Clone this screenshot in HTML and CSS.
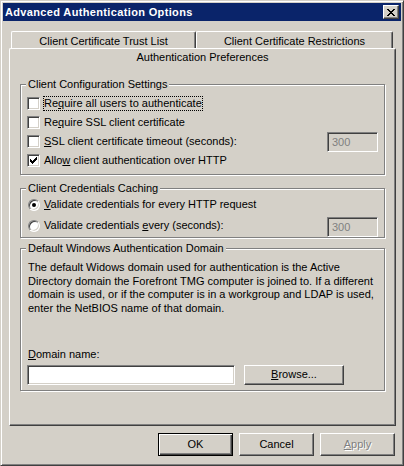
FILE: index.html
```html
<!DOCTYPE html>
<html>
<head>
<meta charset="utf-8">
<title>Advanced Authentication Options</title>
<link rel="stylesheet" href="styles.css">
</head>
<body>
<div class="window">
  <div class="titlebar">
    <span class="title">Advanced Authentication Options</span>
    <span class="caption-btn">
      <svg width="8" height="7" viewBox="0 0 8 7" shape-rendering="crispEdges"><path fill="#000" d="M0 0h2v1H0zM6 0h2v1H6zM1 1h2v1H1zM5 1h2v1H5zM2 2h4v1H2zM3 3h2v1H3zM2 4h4v1H2zM1 5h2v1H1zM5 5h2v1H5zM0 6h2v1H0zM6 6h2v1H6z"/></svg>
    </span>
  </div>

  <div class="tabrow">
    <div class="tab tab-trust">Client Certificate Trust List</div>
    <div class="tab tab-restr">Client Certificate Restrictions</div>
  </div>

  <div class="panel">
    <div class="tab-active">Authentication Preferences</div>

    <div class="group group-config">
      <div class="group-title">Client Configuration Settings</div>
      <div class="row row-first">
        <span class="check"></span>
        <span class="label focus">Re<u>q</u>uire all users to authenticate</span>
      </div>
      <div class="row">
        <span class="check"></span>
        <span class="label">Re<u>q</u>uire SSL client certificate</span>
      </div>
      <div class="row">
        <span class="check"></span>
        <span class="label"><u>S</u>SL client certificate timeout (seconds):</span>
        <span class="field field-disabled">300</span>
      </div>
      <div class="row">
        <span class="check"><svg width="7" height="7" viewBox="0 0 7 7" shape-rendering="crispEdges"><path fill="#000" d="M6 0h1v1H6zM5 1h2v1H5zM0 2h1v1H0zM4 2h3v1H4zM0 3h2v1H0zM3 3h3v1H3zM0 4h5v1H0zM1 5h3v1H1zM2 6h1v1H2z"/></svg></span>
        <span class="label">Allo<u>w</u> client authentication over HTTP</span>
      </div>
    </div>

    <div class="group group-cache">
      <div class="group-title">Client Credentials Caching</div>
      <div class="row row-radio1">
        <span class="radio radio-on"></span>
        <span class="label"><u>V</u>alidate credentials for every HTTP request</span>
      </div>
      <div class="row row-radio2">
        <span class="radio radio-up"></span>
        <span class="label label-up">Validate credentials <u>e</u>very (seconds):</span>
        <span class="field field-disabled">300</span>
      </div>
    </div>

    <div class="group group-domain">
      <div class="group-title">Default Windows Authentication Domain</div>
      <p class="desc">The default Widows domain used for authentication is the Active<br>Directory domain the Forefront TMG computer is joined to. If a different<br>domain is used, or if the computer is in a workgroup and LDAP is used,<br>enter the NetBIOS name of that domain.</p>
      <div class="domain-label"><u>D</u>omain name:</div>
      <div class="domain-row">
        <span class="field field-domain"></span>
        <span class="btn btn-browse"><span><u>B</u>rowse...</span></span>
      </div>
    </div>
  </div>

  <div class="buttons">
    <span class="btn btn-default">OK</span>
    <span class="btn">Cancel</span>
    <span class="btn btn-disabled"><span><u>A</u>pply</span></span>
  </div>
</div>
</body>
</html>
```

FILE: styles.css
```css
* {
  box-sizing: border-box;
}

html,
body {
  margin: 0;
  padding: 0;
}

body {
  width: 404px;
  height: 466px;
  background: #d4d0c8;
  font-family: "Liberation Sans", Arial, sans-serif;
  font-size: 11px;
  color: #000;
  overflow: hidden;
}

u {
  text-decoration: underline;
  text-underline-offset: 1px;
}

.window {
  width: 404px;
  height: 466px;
  background: #d4d0c8;
  border: 1px solid;
  border-color: #d4d0c8 #404040 #404040 #d4d0c8;
  box-shadow: inset 1px 1px 0 #fff, inset -1px -1px 0 #808080;
  padding: 2px;
}

/* Title bar */
.titlebar {
  height: 18px;
  background: #0a246a;
  display: flex;
  align-items: center;
  padding: 0 2px;
}

.title {
  flex: 1;
  color: #fff;
  font-weight: bold;
  letter-spacing: 0.35px;
  line-height: 13px;
  white-space: nowrap;
}

.caption-btn {
  flex: none;
  width: 16px;
  height: 14px;
  background: #d4d0c8;
  border: 1px solid;
  border-color: #fff #404040 #404040 #fff;
  box-shadow: inset -1px -1px 0 #808080;
  display: flex;
  align-items: center;
  justify-content: center;
  padding-right: 1px;
}

.caption-btn svg {
  display: block;
}

/* Tabs */
.tabrow {
  display: flex;
  height: 17px;
  margin-top: 10px;
  padding-left: 8px;
}

.tab {
  height: 17px;
  border: 1px solid;
  border-bottom: none;
  border-color: #fff #404040 transparent #fff;
  border-radius: 2px 2px 0 0;
  box-shadow: inset -1px 0 0 #808080;
  padding-top: 3px;
  line-height: 13px;
  text-align: center;
  white-space: nowrap;
}

.tab-trust {
  width: 185px;
}

.tab-restr {
  width: 197px;
}

.panel {
  margin-left: 6px;
  width: 387px;
  height: 378px;
  border: 1px solid;
  border-color: #fff #404040 #404040 #fff;
  border-radius: 2px 2px 0 0;
  box-shadow: inset -1px -1px 0 #808080;
}

.tab-active {
  height: 17px;
  line-height: 17px;
  text-align: center;
}

/* Group boxes */
.group {
  margin-left: 10px;
  width: 365px;
  border: 1px solid #808080;
  box-shadow: 1px 1px 0 #fff, inset 1px 1px 0 #fff;
  padding: 0 6px;
}

.group-title {
  width: max-content;
  height: 13px;
  line-height: 13px;
  margin: -7px 0 0 -1px;
  padding: 0 2px;
  background: #d4d0c8;
  white-space: nowrap;
}

.group-config {
  margin-top: 18px;
  height: 91px;
}

.group-cache {
  margin-top: 13px;
  height: 50px;
}

.group-domain {
  margin-top: 10px;
  height: 143px;
}

.row {
  display: flex;
  align-items: center;
  height: 19px;
}

.row-first {
  margin-top: 3px;
}

.row-radio2 {
  margin-top: 3px;
  height: 20px;
}

.label {
  margin-left: 3px;
  border: 1px solid transparent;
  line-height: 13px;
  white-space: nowrap;
}

.focus {
  border: 1px dotted #000;
}

.label-up {
  margin-bottom: 3px;
}

/* Checkbox */
.check {
  flex: none;
  width: 13px;
  height: 13px;
  background: #fff;
  border: 1px solid;
  border-color: #808080 #fff #fff #808080;
  box-shadow: inset 1px 1px 0 #404040, inset -1px -1px 0 #d4d0c8;
  display: flex;
  align-items: center;
  justify-content: center;
}

.check svg {
  display: block;
}

/* Radio */
.radio {
  flex: none;
  position: relative;
  width: 12px;
  height: 12px;
  margin-left: 1px;
  border-radius: 50%;
  background: #fff;
  border: 1px solid;
  border-color: #808080 #fff #fff #808080;
  box-shadow: inset 1px 1px 0 #404040, inset -1px -1px 0 #d4d0c8;
}

.radio-on::after {
  content: "";
  position: absolute;
  left: 3px;
  top: 3px;
  width: 4px;
  height: 4px;
  border-radius: 50%;
  background: #000;
}

.radio-up {
  margin-bottom: 3px;
}

/* Text fields */
.field {
  flex: none;
  display: block;
  height: 20px;
  background: #fff;
  border: 1px solid;
  border-color: #808080 #fff #fff #808080;
  box-shadow: inset 1px 1px 0 #404040, inset -1px -1px 0 #d4d0c8;
  padding-left: 4px;
  line-height: 18px;
}

.field-disabled {
  width: 51px;
  margin-left: auto;
  background: #d4d0c8;
  color: #808080;
}

.field-domain {
  width: 208px;
}

/* Domain section */
.desc {
  margin: 6px 0 0 1px;
  line-height: 13.67px;
  white-space: nowrap;
}

.domain-label {
  margin: 32px 0 0 1px;
  line-height: 13px;
  height: 13px;
}

.domain-row {
  display: flex;
  margin-top: 4px;
}

/* Buttons */
.btn {
  flex: none;
  width: 75px;
  height: 23px;
  background: #d4d0c8;
  border: 1px solid;
  border-color: #fff #404040 #404040 #fff;
  box-shadow: inset -1px -1px 0 #808080;
  display: flex;
  align-items: center;
  justify-content: center;
  line-height: 13px;
  white-space: nowrap;
}

.btn-browse {
  width: 100px;
  height: 20px;
  margin-left: 9px;
}

.btn-default {
  border: 1px solid #000;
  box-shadow: inset 1px 1px 0 #fff, inset -1px -1px 0 #404040, inset -2px -2px 0 #808080;
}

.btn-disabled {
  color: #808080;
  text-shadow: 1px 1px 0 #fff;
}

.buttons {
  display: flex;
  justify-content: flex-end;
  gap: 6px;
  width: 387px;
  margin: 7px 0 0 6px;
  padding-right: 1px;
}
```
